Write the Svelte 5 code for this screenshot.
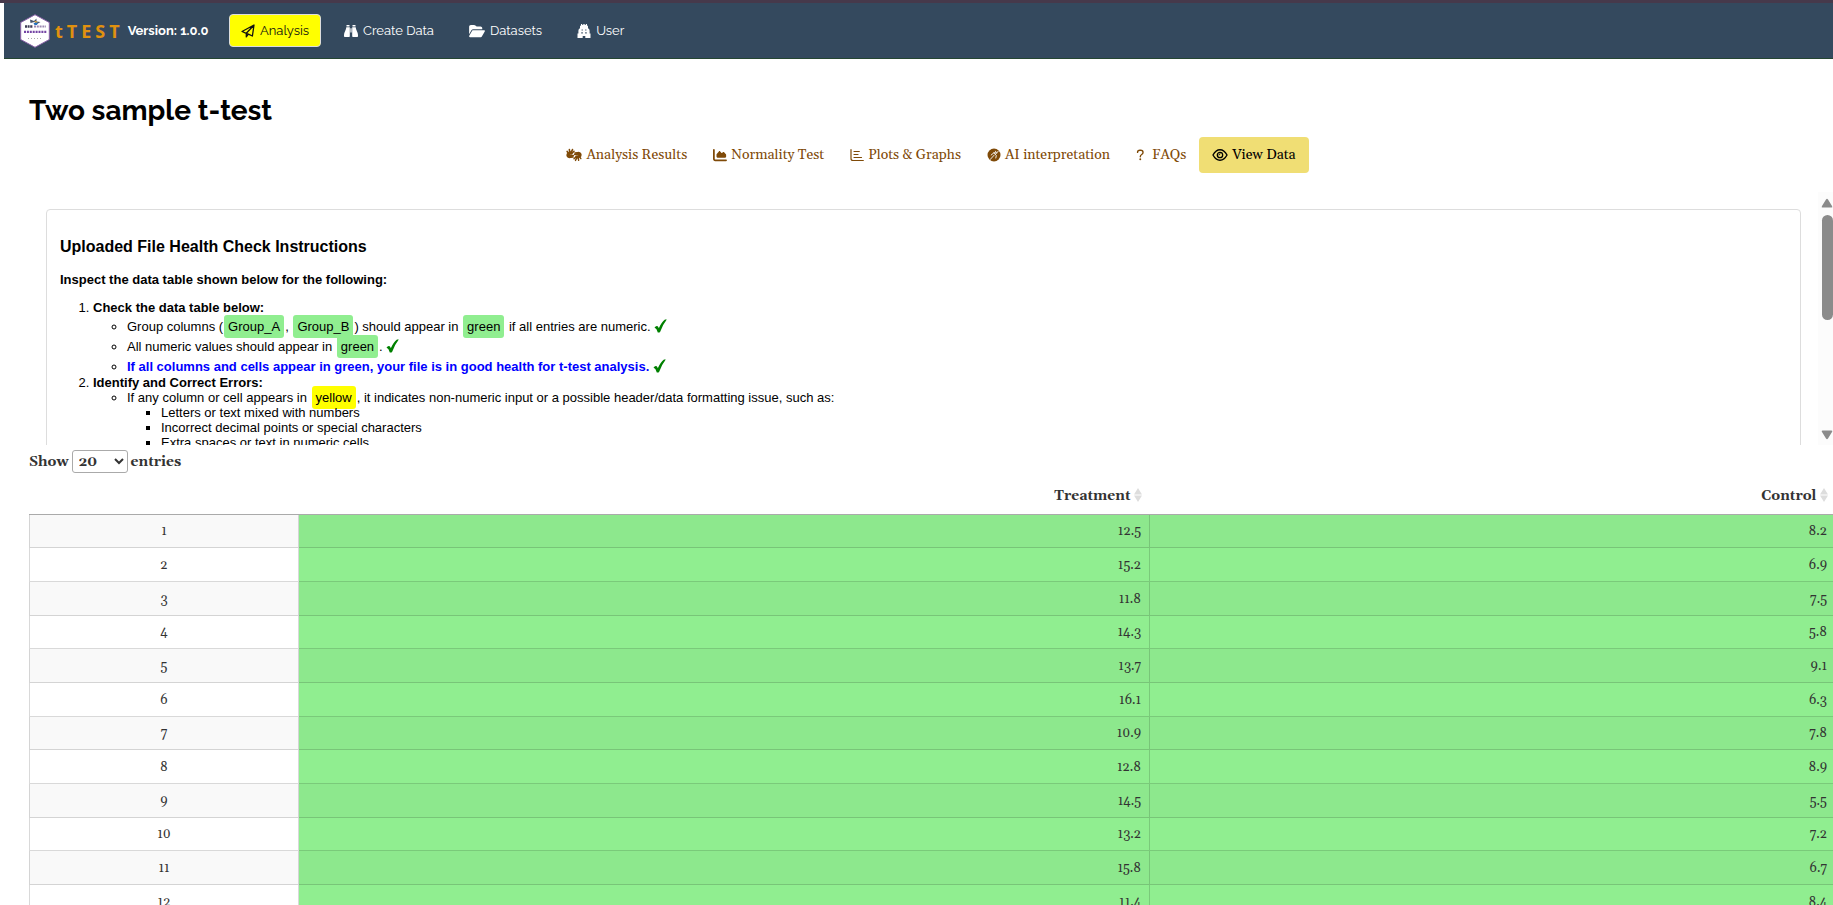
<script>
  const navItems = [
    { label: 'Analysis', icon: 'plane', active: true },
    { label: 'Create Data', icon: 'binoculars' },
    { label: 'Datasets', icon: 'folder' },
    { label: 'User', icon: 'temple' }
  ];

  const tabs = [
    { label: 'Analysis Results', icon: 'hands' },
    { label: 'Normality Test', icon: 'area' },
    { label: 'Plots & Graphs', icon: 'bars' },
    { label: 'AI interpretation', icon: 'orb' },
    { label: 'FAQs', icon: 'question' },
    { label: 'View Data', icon: 'eye', active: true }
  ];

  const rows = [
    ['12.5', '8.2'],
    ['15.2', '6.9'],
    ['11.8', '7.5'],
    ['14.3', '5.8'],
    ['13.7', '9.1'],
    ['16.1', '6.3'],
    ['10.9', '7.8'],
    ['12.8', '8.9'],
    ['14.5', '5.5'],
    ['13.2', '7.2'],
    ['15.8', '6.7'],
    ['11.4', '8.4']
  ];

  let pageLength = $state('20');
</script>

{#snippet icon(name)}
  {#if name === 'plane'}
    <svg class="icon" viewBox="0 0 14 14" aria-hidden="true"><path d="M13 1 11.4 12 7.4 10.2 5.3 12.9V9.3L1 7.5ZM5.3 9.3 12.4 1.8M7.4 10.2 5.3 9.3" fill="none" stroke="currentColor" stroke-width="1.3" stroke-linejoin="round" /></svg>
  {:else if name === 'binoculars'}
    <svg class="icon" viewBox="0 0 14 14" aria-hidden="true"><path fill="currentColor" d="M2.500 1H5.500V2.500H2.500ZM8.500 1H11.500V2.500H8.500ZM2.300 3.200H5.800V12.200Q5.800 13 5 13H.8Q0 13 0 12.200V11Q.1 9 1.100 7.200 2 5.600 2.300 3.200ZM8.200 3.200H11.700Q12 5.600 12.900 7.200 13.900 9 14 11V12.200Q14 13 13.200 13H9Q8.200 13 8.200 12.200ZM6.400 4.200H7.600V8.500H6.400Z" /></svg>
  {:else if name === 'folder'}
    <svg class="icon wide" viewBox="0 0 576 512" aria-hidden="true"><path fill="currentColor" d="M88.7 223.8 0 375.8V96c0-35.3 28.7-64 64-64h117.5c17 0 33.3 6.7 45.3 18.7l26.5 26.5c12 12 28.3 18.7 45.3 18.7H416c35.3 0 64 28.7 64 64v32H144c-22.8 0-43.8 12.1-55.3 31.8zm27.6 16.1C122.1 230 132.6 224 144 224h400c11.5 0 22 6.1 27.7 16.1s5.7 22.2-.1 32.1l-112 192C453.9 474 443.4 480 432 480H32c-11.5 0-22-6.1-27.7-16.1s-5.7-22.2.1-32.1z" /></svg>
  {:else if name === 'temple'}
    <svg class="icon" viewBox="0 0 14 14" aria-hidden="true"><path fill="currentColor" fill-rule="evenodd" d="M4 0h1.200v1H6.300V0h1.400v1h1.100V0H10v1.200l1 1V4.500h.6q1 1 1 2.300V9.500h.9V14H8.300V12H5.700V14H.5V9.500h.9V6.800q0-1.300 1-2.300H3V2.200l1-1zM4.600 5.500v1.100h1.200V5.500zm3.600 0v1.100h1.200V5.500zM4.300 8.300v1.200h1.500V8.300zm3.900 0v1.200h1.500V8.300z" /></svg>
  {:else if name === 'hands'}
    <svg class="icon wide" viewBox="0 0 18 14" aria-hidden="true"><g fill="none" stroke="currentColor" stroke-linecap="round" stroke-linejoin="round"><path stroke-width="1.800" d="M1.300 3 3 5.500M3.800 1 4.300 4.500M7.300.9 5.500 4.600M9 2.800 6.500 5.300" /><path stroke-width="3.600" d="M5.500 5Q2 5 2.200 7.300q.2 1.700 2.600 1.400" /><path stroke-width="1.600" d="m5 9.600 3-.3M6 7.500h2.300M16.700 11 15 8.500M14.200 13l-.5-3.500M10.700 13.100l1.800-3.700M9 11.200l2.500-2.500" /><path stroke-width="3.600" d="M12.500 9Q16 9 15.800 6.700q-.2-1.700-2.600-1.400" /><path stroke-width="1.600" d="m13 4.400-3 .3M12 6.500H9.700" /></g></svg>
  {:else if name === 'area'}
    <svg class="icon" viewBox="0 0 512 512" aria-hidden="true"><path fill="currentColor" d="M64 64c0-17.700-14.300-32-32-32S0 46.300 0 64v336c0 44.200 35.800 80 80 80h400c17.700 0 32-14.300 32-32s-14.300-32-32-32H80c-8.800 0-16-7.200-16-16zm96 288h288c17.700 0 32-14.300 32-32v-68.200c0-7.600-2.700-15-7.700-20.800l-65.800-76.800c-12.100-14.200-33.700-15-46.900-1.800l-21 21c-10 10-26.400 9.200-35.400-1.600l-39.200-47c-12.600-15.100-35.700-15.400-48.700-.6L135.900 215c-5.100 5.800-7.900 13.300-7.900 21.100v84c0 17.700 14.300 32 32 32z" /></svg>
  {:else if name === 'bars'}
    <svg class="icon" viewBox="0 0 14 14" aria-hidden="true"><path d="M1 1.500v9q0 2 2 2h10.300M4 3.500h5.300M4 6.500h4M4 9.500h7.500" fill="none" stroke="currentColor" stroke-width="1.200" stroke-linecap="round" /></svg>
  {:else if name === 'orb'}
    <svg class="icon" viewBox="0 0 14 14" aria-hidden="true"><circle cx="7" cy="7" r="6.500" fill="currentColor" /><path d="M3.200 11.500 7.300 7M4.200 7l2.800-2.300 2.300 2.800-.5 2.500M7.200 4.700l2.300.5 1.700-2M8.500 3.200l1 2" fill="none" stroke="#fff" stroke-width=".9" stroke-linecap="round" stroke-linejoin="round" /></svg>
  {:else if name === 'question'}
    <svg class="icon narrow" viewBox="0 0 10 14" preserveAspectRatio="xMinYMid" aria-hidden="true"><path d="M1.800 4Q1.800 1.500 4.600 1.500h.8q2.800 0 2.800 2.500 0 1.500-1.600 2.400Q5 7.300 5 9" fill="none" stroke="currentColor" stroke-width="1.600" stroke-linecap="round" /><circle cx="5" cy="12" r="1.100" fill="currentColor" /></svg>
  {:else}
    <svg class="icon wide" viewBox="0 0 16 14" aria-hidden="true"><path d="M1 7q2.800-5.200 7-5.200T15 7q-2.800 5.200-7 5.200T1 7Z" fill="none" stroke="currentColor" stroke-width="1.400" /><circle cx="8" cy="7" r="2.700" fill="none" stroke="currentColor" stroke-width="1.300" /><path d="M8 5.500A1.500 1.500 0 0 1 6.500 7" fill="none" stroke="currentColor" /></svg>
  {/if}
{/snippet}

{#snippet check()}
  <svg class="check" viewBox="0 0 13 14" role="img" aria-label="OK"><path fill="green" d="M.5 8.500Q2.200 6.300 3.700 7.300 4.400 8 4.800 9.300 7.500 3 11 .5H12.800Q8.500 6 6.200 12.700L5.500 13.400H3.800Q2.800 9.600.5 8.500Z" /></svg>
{/snippet}

{#snippet sorter()}
  <svg class="sorter" viewBox="0 0 8 14" aria-hidden="true"><path fill="#ddd" d="M0 6.500 4 0l4 6.500ZM0 7.500h8L4 14Z" /></svg>
{/snippet}

<div class="page">
  <header>
    <div class="brand">
      <svg class="logo" viewBox="0 0 30 34" aria-hidden="true">
        <path d="M15 .7 29.300 8.500v17L15 33.300.7 25.500v-17Z" fill="#fff" stroke="#8a62a8" />
        <path d="m10 5.500 4 1.500 2.500-2.500v3l4 .5-3.500 2-2.500-2-4 1Z" fill="#46566e" />
        <path d="m14.500 6.800 2.500.7.500 1.500-2.500-.5Z" fill="#e7ac35" />
        <path d="m13.500 9 4.500-.5-1 2.500h-2.500Z" fill="#2674c0" />
        <path d="M5 12.500h8" stroke="#3e3d55" stroke-width="2.400" stroke-dasharray="2 .6" />
        <path d="M14 12.500h12" stroke="#9a87b0" stroke-width="2" stroke-dasharray="2 .8" />
        <path d="M4 17.800h22.500" stroke="#7545a5" stroke-width="2.200" stroke-dasharray="2 .9" />
        <path d="M8 24.500h15" stroke="#aaa" stroke-dasharray="1 2" />
      </svg>
      <span class="name">tTEST</span>
      <span class="version">Version: 1.0.0</span>
    </div>
    <nav aria-label="Main">
      {#each navItems as item}
        <a href="#main" class:active={item.active}>{@render icon(item.icon)}<span>{item.label}</span></a>
      {/each}
    </nav>
  </header>

  <main id="main">
    <h1>Two sample t-test</h1>

    <div class="tabs" role="tablist">
      {#each tabs as tab}
        <button type="button" role="tab" aria-selected={!!tab.active} class:active={tab.active}>{@render icon(tab.icon)}<span>{tab.label}</span></button>
      {/each}
    </div>

    <section class="scroller">
      <div class="card">
        <h2>Uploaded File Health Check Instructions</h2>
        <p><b>Inspect the data table shown below for the following:</b></p>
        <ol>
          <li>
            <b>Check the data table below:</b>
            <ul class="roomy">
              <li>Group columns (<mark>Group_A</mark>, <mark>Group_B</mark>) should appear in <mark>green</mark> if all entries are numeric. {@render check()}</li>
              <li>All numeric values should appear in <mark>green</mark>. {@render check()}</li>
              <li><b class="good">If all columns and cells appear in green, your file is in good health for t-test analysis.</b> {@render check()}</li>
            </ul>
          </li>
          <li>
            <b>Identify and Correct Errors:</b>
            <ul>
              <li>
                If any column or cell appears in <mark class="warn">yellow</mark>, it indicates non-numeric input or a possible header/data formatting issue, such as:
                <ul class="over">
                  <li>Letters or text mixed with numbers</li>
                  <li>Incorrect decimal points or special characters</li>
                  <li>Extra spaces or text in numeric cells</li>
                </ul>
              </li>
            </ul>
          </li>
        </ol>
      </div>
      <div class="scrollbar" aria-hidden="true">
        <svg viewBox="0 0 12 10"><path d="M1.500 9.500Q0 9.500 1 8L5 1.500q1-1.500 2 0L11 8q1 1.500-.5 1.500Z" fill="#8b8b8b" /></svg>
        <div class="thumb"></div>
        <svg class="down" viewBox="0 0 12 10"><path d="M1.500.5Q0 .5 1 2l4 6.500q1 1.500 2 0L11 2q1-1.500-.5-1.500Z" fill="#8b8b8b" /></svg>
      </div>
    </section>

    <label class="length">
      Show
      <select bind:value={pageLength}>
        <option>10</option>
        <option>20</option>
        <option>50</option>
      </select>
      entries
    </label>

    <table>
      <colgroup><col class="index" /><col class="first" /><col /></colgroup>
      <thead>
        <tr><th></th><th>Treatment {@render sorter()}</th><th>Control {@render sorter()}</th></tr>
      </thead>
      <tbody>
        {#each rows as [treatment, control], i}
          <tr><td>{i + 1}</td><td>{treatment}</td><td>{control}</td></tr>
        {/each}
      </tbody>
    </table>
  </main>
</div>

<style>
  :global(body) {
    background: #fff;
    overflow: hidden;
  }

  .page {
    height: 100vh;
    overflow: hidden;
    box-sizing: border-box;
    border-top: 3px solid #46394b;
    padding-left: 4px;
    color: #333;
    font-family: Georgia, Gelasio, 'DejaVu Serif', serif;
    font-size: 13px;
  }

  header {
    display: flex;
    align-items: center;
    height: 56px;
    box-sizing: border-box;
    padding-left: 16px;
    background: #34495e;
    border-bottom: 1px solid #254632;
    color: #fff;
    font-family: Raleway, Lato, sans-serif;
  }

  .brand {
    display: flex;
    align-items: center;
    width: 209px;
  }

  .logo {
    width: 30px;
    height: 34px;
    margin-right: 5px;
  }

  .name {
    color: #e0910f;
    font: bold 18px 'Open Sans', sans-serif;
    letter-spacing: 4px;
    margin-right: 4px;
  }

  .version {
    font-weight: bold;
    font-size: 13px;
  }

  nav {
    display: flex;
    gap: 11px;
  }

  nav a {
    display: flex;
    align-items: center;
    gap: 5px;
    height: 33px;
    box-sizing: border-box;
    padding: 0 11px;
    border: 1px solid transparent;
    border-radius: 4px;
    color: #fff;
    font-size: 13px;
    text-decoration: none;
  }

  nav a.active {
    background: #ff0;
    border-color: #ddd;
    color: #111;
  }

  .icon {
    flex: none;
    width: 14px;
    height: 14px;
  }

  .icon.wide {
    width: 16px;
  }

  .icon.narrow {
    width: 12px;
    height: 12px;
  }

  main {
    padding-left: 25px;
  }

  h1 {
    margin: 0;
    padding: 32px 0 6px;
    color: #000;
    font: bold 28px/40px Raleway, Lato, sans-serif;
  }

  .tabs {
    display: flex;
    justify-content: center;
  }

  .tabs button {
    display: flex;
    align-items: center;
    gap: 4px;
    height: 36px;
    padding: 0 13px;
    border: 0;
    border-radius: 4px;
    background: none;
    color: #7f4a08;
    font: 14px Georgia, Gelasio, serif;
  }

  .tabs button.active {
    background: #f0de74;
    color: #000;
  }

  .scroller {
    display: flex;
    height: 253px;
    margin-top: 19px;
    overflow: hidden;
  }

  .card {
    flex: 1;
    height: 600px;
    margin: 17px 17px 0 17px;
    padding: 27px 13px;
    border: 1px solid #ddd;
    border-radius: 4px;
    color: #000;
    font: 13px/15px 'Liberation Sans', Arial, sans-serif;
  }

  h2 {
    margin: 0;
    font-size: 16px;
    line-height: 20px;
  }

  .card p {
    margin: 15px 0 13px;
  }

  ol,
  ul {
    margin: 0;
    padding-left: 34px;
  }

  ol {
    padding-left: 33px;
  }

  .roomy {
    margin: 2px 0 -2px;
  }

  .roomy li {
    line-height: 20px;
  }

  .over {
    position: relative;
  }

  mark {
    margin: 0 1px;
    padding: 4px;
    border-radius: 3px;
    background: #90ee90;
    color: #000;
  }

  .warn {
    background: #ff0;
  }

  .good {
    color: #00f;
  }

  .check {
    width: 13px;
    height: 14px;
    vertical-align: -2px;
  }

  .scrollbar {
    display: flex;
    flex-direction: column;
    flex: none;
    width: 15px;
    box-sizing: border-box;
    padding: 6px 0 5px 3px;
    background: #fcfcfc;
  }

  .scrollbar svg {
    flex: none;
    width: 12px;
    height: 10px;
  }

  .scrollbar .down {
    margin-top: auto;
  }

  .thumb {
    width: 11px;
    height: 105px;
    margin: 7px 0 0 1px;
    border-radius: 6px;
    background: #8b8b8b;
  }

  .length {
    display: flex;
    align-items: center;
    gap: 3px;
    height: 33px;
    font-weight: bold;
    font-size: 14px;
  }

  select {
    width: 56px;
    height: 23px;
    padding: 0 2px;
    border: 1px solid #aaa;
    border-radius: 3px;
    background: #fff;
    color: #333;
    font: inherit;
  }

  table {
    width: calc(100% + 3px);
    table-layout: fixed;
    border-collapse: separate;
    border-spacing: 0;
  }

  .index {
    width: 270px;
  }

  .first {
    width: 47.1%;
  }

  th {
    height: 36px;
    padding: 0 8px;
    border-bottom: 1px solid #aaa;
    font-size: 14px;
    text-align: right;
  }

  .sorter {
    width: 8px;
    height: 14px;
    vertical-align: -2px;
  }

  td {
    height: 34px;
    box-sizing: border-box;
    padding: 0 8px;
    border-right: 1px solid rgba(0, 0, 0, 0.15);
    border-bottom: 1px solid rgba(0, 0, 0, 0.15);
    background: #90ee90;
    text-align: right;
  }

  tr:nth-child(3n + 1) td {
    height: 33px;
  }

  tr:nth-child(odd) td {
    background: #8de88d;
  }

  td:first-child {
    border-left: 1px solid rgba(0, 0, 0, 0.15);
    background: #fff;
    text-align: center;
  }

  tr:nth-child(odd) td:first-child {
    background: #f9f9f9;
  }
</style>
